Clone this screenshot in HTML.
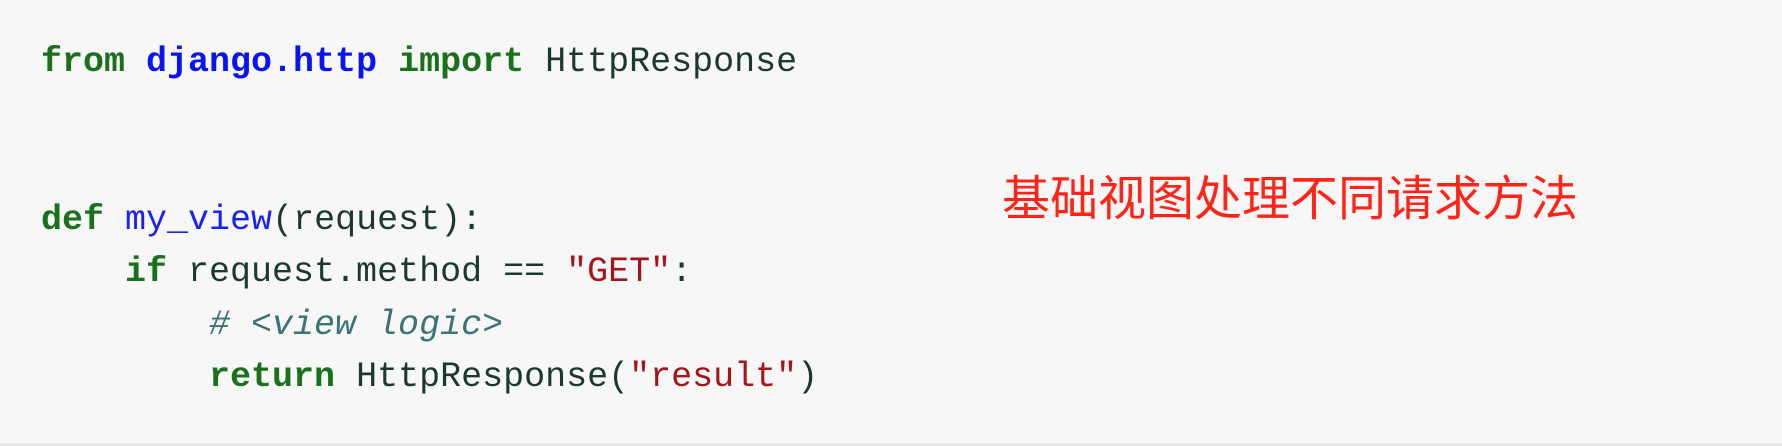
<!DOCTYPE html>
<html><head><meta charset="utf-8"><style>
html,body{margin:0;padding:0;background:#f7f7f7;width:1782px;height:446px;overflow:hidden;position:relative}
pre{position:absolute;left:41px;top:36px;margin:0;font-family:"Liberation Mono",monospace;font-size:35px;line-height:52.5px;color:#1c3a2c;letter-spacing:0px}
.k{color:#19711c;font-weight:bold}
.m{color:#0a14f0;font-weight:bold}
.f{color:#1a22f0}
.s{color:#a3151a}
.c{color:#3a7474;font-style:italic}
.cn{position:absolute;left:1002px;top:171px;font-family:"Liberation Sans","Noto Sans CJK SC",sans-serif;font-size:48px;line-height:58px;color:#ff2418;white-space:nowrap}
.bl{position:absolute;left:0;right:0;top:443px;height:3px;background:#e6e6e6}
</style></head><body>
<pre><span class="k">from</span> <span class="m">django.http</span> <span class="k">import</span> HttpResponse


<span class="k">def</span> <span class="f">my_view</span>(request):
    <span class="k">if</span> request.method == <span class="s">"GET"</span>:
        <span class="c"># &lt;view logic&gt;</span>
        <span class="k">return</span> HttpResponse(<span class="s">"result"</span>)</pre>
<div class="cn">基础视图处理不同请求方法</div>
<div class="bl"></div>
</body></html>
